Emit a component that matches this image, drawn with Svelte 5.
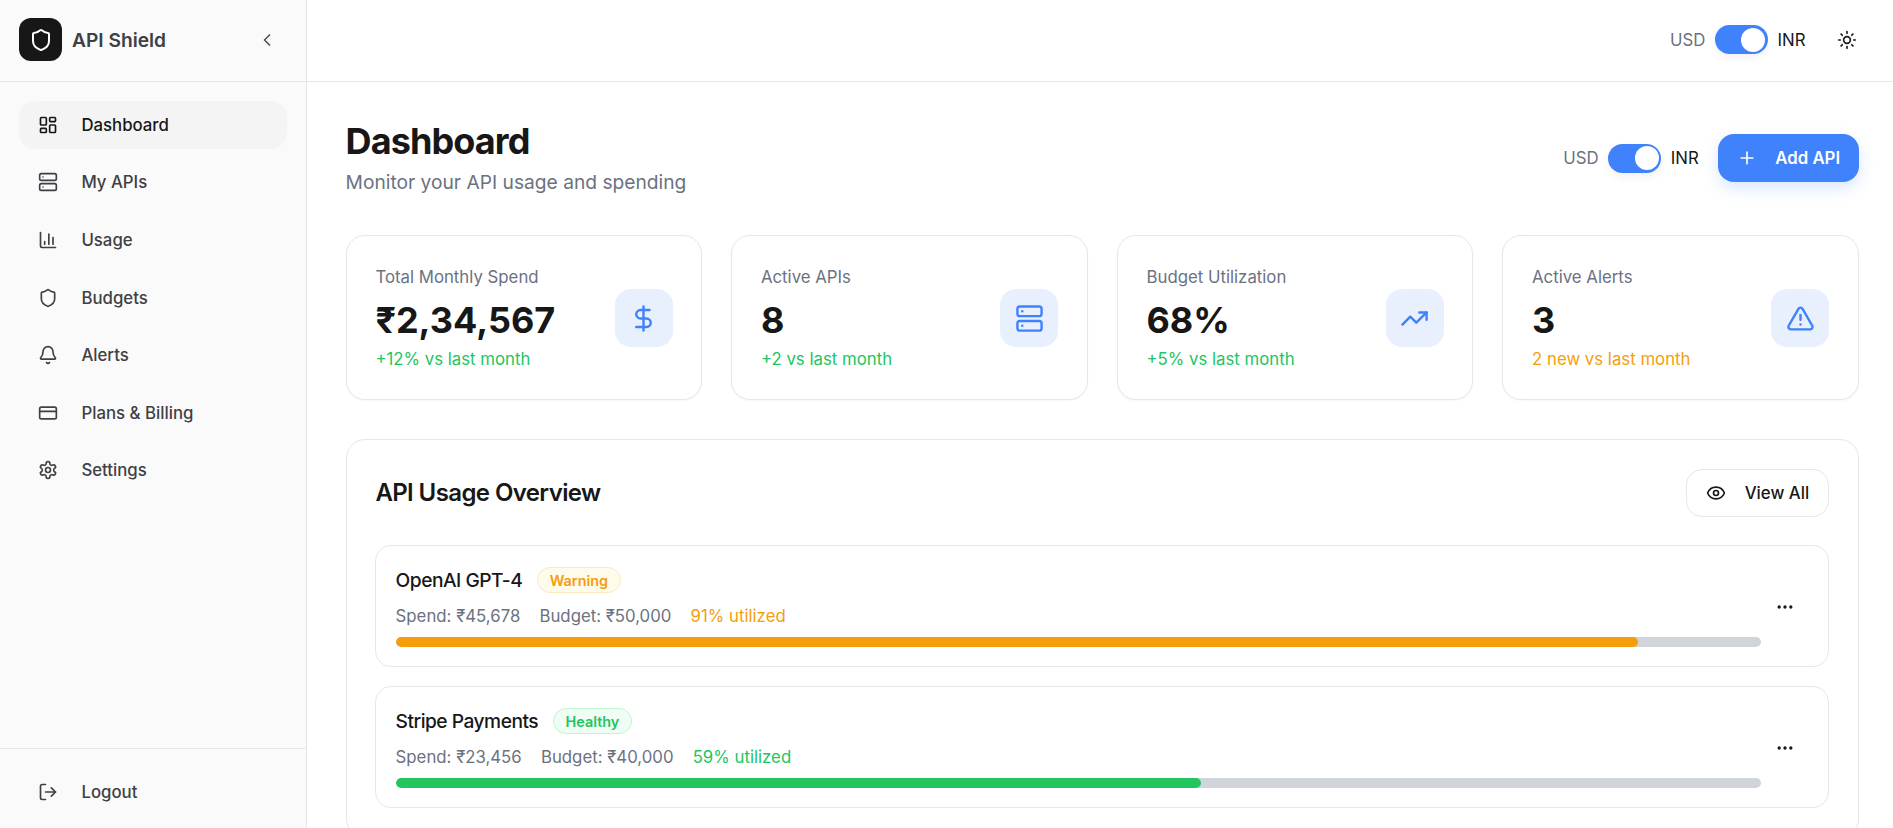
<script lang="ts">
  const icons: Record<string, string> = {
    dashboard: '<rect width="7" height="9" x="3" y="3" rx="1"/><rect width="7" height="5" x="14" y="3" rx="1"/><rect width="7" height="9" x="14" y="12" rx="1"/><rect width="7" height="5" x="3" y="16" rx="1"/>',
    server: '<rect width="20" height="8" x="2" y="2" rx="2"/><rect width="20" height="8" x="2" y="14" rx="2"/><line x1="6" x2="6.01" y1="6" y2="6"/><line x1="6" x2="6.01" y1="18" y2="18"/>',
    chart: '<path d="M3 3v16a2 2 0 0 0 2 2h16"/><path d="M18 17V9"/><path d="M13 17V5"/><path d="M8 17v-3"/>',
    shield: '<path d="M20 13c0 5-3.5 7.5-7.66 8.95a1 1 0 0 1-.67-.01C7.5 20.5 4 18 4 13V6a1 1 0 0 1 1-1c2 0 4.5-1.2 6.24-2.72a1.17 1.17 0 0 1 1.52 0C14.51 3.81 17 5 19 5a1 1 0 0 1 1 1z"/>',
    bell: '<path d="M10.268 21a2 2 0 0 0 3.464 0"/><path d="M3.262 15.326A1 1 0 0 0 4 17h16a1 1 0 0 0 .74-1.673C19.41 13.956 18 12.499 18 8A6 6 0 0 0 6 8c0 4.499-1.411 5.956-2.738 7.326"/>',
    card: '<rect width="20" height="14" x="2" y="5" rx="2"/><line x1="2" x2="22" y1="10" y2="10"/>',
    settings: '<path d="M12.22 2h-.44a2 2 0 0 0-2 2v.18a2 2 0 0 1-1 1.73l-.43.25a2 2 0 0 1-2 0l-.15-.08a2 2 0 0 0-2.73.73l-.22.38a2 2 0 0 0 .73 2.73l.15.1a2 2 0 0 1 1 1.72v.51a2 2 0 0 1-1 1.74l-.15.09a2 2 0 0 0-.73 2.73l.22.38a2 2 0 0 0 2.73.73l.15-.08a2 2 0 0 1 2 0l.43.25a2 2 0 0 1 1 1.73V20a2 2 0 0 0 2 2h.44a2 2 0 0 0 2-2v-.18a2 2 0 0 1 1-1.73l.43-.25a2 2 0 0 1 2 0l.15.08a2 2 0 0 0 2.73-.73l.22-.39a2 2 0 0 0-.73-2.73l-.15-.08a2 2 0 0 1-1-1.74v-.5a2 2 0 0 1 1-1.74l.15-.09a2 2 0 0 0 .73-2.73l-.22-.38a2 2 0 0 0-2.73-.73l-.15.08a2 2 0 0 1-2 0l-.43-.25a2 2 0 0 1-1-1.73V4a2 2 0 0 0-2-2z"/><circle cx="12" cy="12" r="3"/>',
    logout: '<path d="M9 21H5a2 2 0 0 1-2-2V5a2 2 0 0 1 2-2h4"/><polyline points="16 17 21 12 16 7"/><line x1="21" x2="9" y1="12" y2="12"/>',
    chevron: '<path d="m15 18-6-6 6-6"/>',
    sun: '<circle cx="12" cy="12" r="4"/><path d="M12 2v2"/><path d="M12 20v2"/><path d="m4.93 4.93 1.41 1.41"/><path d="m17.66 17.66 1.41 1.41"/><path d="M2 12h2"/><path d="M20 12h2"/><path d="m6.34 17.66-1.41 1.41"/><path d="m19.07 4.93-1.41 1.41"/>',
    plus: '<path d="M5 12h14"/><path d="M12 5v14"/>',
    dollar: '<line x1="12" x2="12" y1="2" y2="22"/><path d="M17 5H9.5a3.5 3.5 0 0 0 0 7h5a3.5 3.5 0 0 1 0 7H6"/>',
    trend: '<polyline points="22 7 13.5 15.5 8.5 10.5 2 17"/><polyline points="16 7 22 7 22 13"/>',
    alert: '<path d="m21.73 18-8-14a2 2 0 0 0-3.48 0l-8 14A2 2 0 0 0 4 21h16a2 2 0 0 0 1.73-3"/><path d="M12 9v4"/><path d="M12 17h.01"/>',
    eye: '<path d="M2.062 12.348a1 1 0 0 1 0-.696 10.75 10.75 0 0 1 19.876 0 1 1 0 0 1 0 .696 10.75 10.75 0 0 1-19.876 0"/><circle cx="12" cy="12" r="3"/>',
    more: '<circle cx="12" cy="12" r="1"/><circle cx="19" cy="12" r="1"/><circle cx="5" cy="12" r="1"/>',
  };

  const nav = [
    { label: "Dashboard", icon: "dashboard", active: true },
    { label: "My APIs", icon: "server" },
    { label: "Usage", icon: "chart" },
    { label: "Budgets", icon: "shield" },
    { label: "Alerts", icon: "bell" },
    { label: "Plans & Billing", icon: "card" },
    { label: "Settings", icon: "settings" },
  ];

  const stats = [
    { label: "Total Monthly Spend", value: "₹2,34,567", note: "+12% vs last month", tone: "good", icon: "dollar" },
    { label: "Active APIs", value: "8", note: "+2 vs last month", tone: "good", icon: "server" },
    { label: "Budget Utilization", value: "68%", note: "+5% vs last month", tone: "good", icon: "trend" },
    { label: "Active Alerts", value: "3", note: "2 new vs last month", tone: "warn", icon: "alert" },
  ];

  const apis = [
    { name: "OpenAI GPT-4", status: "Warning", tone: "warn", spend: "₹45,678", budget: "₹50,000", pct: 91 },
    { name: "Stripe Payments", status: "Healthy", tone: "good", spend: "₹23,456", budget: "₹40,000", pct: 59 },
  ];

  let inr = $state(true);
</script>

{#snippet icon(name: string, size: number)}
  <svg
    width={size}
    height={size}
    viewBox="0 0 24 24"
    fill="none"
    stroke="currentColor"
    stroke-width="2"
    stroke-linecap="round"
    stroke-linejoin="round"
  >
    {@html icons[name]}
  </svg>
{/snippet}

{#snippet currency()}
  <div class="currency">
    <span class="usd">USD</span>
    <button type="button" class="toggle" class:on={inr} aria-label="Toggle currency" onclick={() => (inr = !inr)}>
      <span class="knob"></span>
    </button>
    <span class="inr">INR</span>
  </div>
{/snippet}

<div class="app">
  <aside class="sidebar">
    <div class="brand">
      <div class="logo">{@render icon("shield", 24)}</div>
      <span class="brand-name">API Shield</span>
      <button type="button" class="collapse" aria-label="Collapse">{@render icon("chevron", 20)}</button>
    </div>

    <nav class="nav">
      {#each nav as item (item.label)}
        <button type="button" class="nav-item" class:active={item.active}>
          {@render icon(item.icon, 20)}
          <span>{item.label}</span>
        </button>
      {/each}
    </nav>

    <div class="sidebar-foot">
      <button type="button" class="nav-item">
        {@render icon("logout", 20)}
        <span>Logout</span>
      </button>
    </div>
  </aside>

  <div class="main">
    <header class="topbar">
      {@render currency()}
      <button type="button" class="theme" aria-label="Theme">{@render icon("sun", 20)}</button>
    </header>

    <main class="content">
      <div class="page-head">
        <div>
          <h1>Dashboard</h1>
          <p>Monitor your API usage and spending</p>
        </div>
        <div class="head-actions">
          {@render currency()}
          <button type="button" class="add">
            {@render icon("plus", 20)}
            <span>Add API</span>
          </button>
        </div>
      </div>

      <div class="stats">
        {#each stats as s (s.label)}
          <div class="stat">
            <div class="stat-text">
              <div class="stat-label">{s.label}</div>
              <div class="stat-value">{s.value}</div>
              <div class="stat-note {s.tone}">{s.note}</div>
            </div>
            <div class="stat-icon">{@render icon(s.icon, 29)}</div>
          </div>
        {/each}
      </div>

      <section class="panel">
        <div class="panel-head">
          <h2>API Usage Overview</h2>
          <button type="button" class="view-all">
            {@render icon("eye", 20)}
            <span>View All</span>
          </button>
        </div>

        <div class="rows">
          {#each apis as api (api.name)}
            <div class="row">
              <div class="row-body">
                <div class="row-title">
                  <span class="api-name">{api.name}</span>
                  <span class="badge {api.tone}">{api.status}</span>
                </div>
                <div class="row-meta">
                  <span>Spend: {api.spend}</span>
                  <span>Budget: {api.budget}</span>
                  <span class="pct {api.tone}">{api.pct}% utilized</span>
                </div>
                <div class="track">
                  <div class="fill {api.tone}" style="width: {api.pct}%"></div>
                </div>
              </div>
              <button type="button" class="more" aria-label="More">{@render icon("more", 20)}</button>
            </div>
          {/each}
        </div>
      </section>
    </main>
  </div>
</div>

<style>
  :global(body) {
    margin: 0;
    background: #fff;
    font-family: Inter, "Noto Sans", sans-serif;
    color: #171717;
  }

  button {
    font: inherit;
    color: inherit;
    background: none;
    border: none;
    padding: 0;
    cursor: pointer;
  }

  svg {
    display: block;
    flex-shrink: 0;
  }

  .app {
    display: flex;
    height: 100vh;
    overflow: hidden;
  }

  .sidebar {
    width: 307.2px;
    flex-shrink: 0;
    box-sizing: border-box;
    display: flex;
    flex-direction: column;
    background: #fafafa;
    border-right: 1px solid #e5e7eb;
  }

  .brand {
    height: 81.6px;
    box-sizing: border-box;
    display: flex;
    align-items: center;
    padding: 0 29px 1px 19px;
    border-bottom: 1px solid #e5e7eb;
  }

  .logo {
    width: 43px;
    height: 43px;
    display: flex;
    align-items: center;
    justify-content: center;
    border-radius: 12px;
    background: #171717;
    color: #fff;
  }

  .brand-name {
    margin-left: 10px;
    font-size: 19.2px;
    font-weight: 600;
    color: #3f3f46;
  }

  .collapse {
    margin-left: auto;
    color: #525252;
  }

  .nav {
    flex: 1;
    display: flex;
    flex-direction: column;
    gap: 9.6px;
    padding: 19.2px 19px;
  }

  .nav-item {
    width: 100%;
    height: 48px;
    flex-shrink: 0;
    display: flex;
    align-items: center;
    gap: 23.4px;
    padding: 0 19px;
    box-sizing: border-box;
    border-radius: 16px;
    font-size: 16.8px;
    font-weight: 500;
    color: #3f3f46;
    text-align: left;
  }

  .nav-item.active {
    background: #f4f4f5;
    color: #171717;
  }

  .sidebar-foot {
    padding: 19.2px 19px 12px;
    border-top: 1px solid #e5e7eb;
  }

  .main {
    flex: 1;
    min-width: 0;
    display: flex;
    flex-direction: column;
  }

  .topbar {
    height: 81.6px;
    flex-shrink: 0;
    box-sizing: border-box;
    display: flex;
    align-items: center;
    justify-content: flex-end;
    gap: 31px;
    padding: 0 36.5px 1px 0;
    border-bottom: 1px solid #e5e7eb;
  }

  .theme {
    color: #171717;
  }

  .currency {
    display: flex;
    align-items: center;
    gap: 9.6px;
    font-size: 16.8px;
  }

  .usd {
    color: #6b7280;
  }

  .inr {
    color: #171717;
  }

  .toggle {
    width: 53px;
    height: 29px;
    display: flex;
    align-items: center;
    justify-content: flex-start;
    padding: 0 2.5px;
    box-sizing: border-box;
    border-radius: 15px;
    background: #d1d5db;
    box-shadow: 0 4px 10px rgb(0 0 0 / 0.06);
  }

  .toggle.on {
    justify-content: flex-end;
    background: #3f82fb;
  }

  .knob {
    width: 24px;
    height: 24px;
    border-radius: 50%;
    background: #fff;
  }

  .content {
    padding: 38.4px 34px 0 38.4px;
  }

  .page-head {
    display: flex;
    align-items: center;
    justify-content: space-between;
    margin-bottom: 38.4px;
  }

  h1 {
    margin: 0;
    font-size: 36px;
    line-height: 43.2px;
    font-weight: 700;
    letter-spacing: -0.025em;
  }

  .page-head p {
    margin: 4.8px 0 0;
    font-size: 19.2px;
    line-height: 28.8px;
    color: #6b7280;
  }

  .head-actions {
    display: flex;
    align-items: center;
    gap: 19.2px;
  }

  .add {
    height: 48px;
    width: 141px;
    display: flex;
    align-items: center;
    justify-content: center;
    gap: 18.4px;
    border-radius: 16px;
    background: #3f82fb;
    color: #fff;
    font-size: 16.8px;
    font-weight: 600;
    box-shadow: 0 6px 16px rgb(63 130 251 / 0.2);
  }

  .stats {
    display: grid;
    grid-template-columns: repeat(4, 1fr);
    gap: 28.8px;
    margin-bottom: 39px;
  }

  .stat {
    display: flex;
    align-items: center;
    justify-content: space-between;
    padding: 28.8px;
    background: #fff;
    border: 1px solid #e5e7eb;
    border-radius: 19px;
    box-shadow: 0 1px 2px rgb(0 0 0 / 0.04);
  }

  .stat-label {
    font-size: 16.8px;
    line-height: 25px;
    color: #6b7280;
  }

  .stat-value {
    margin-top: 7px;
    font-size: 36px;
    line-height: 46px;
    font-weight: 700;
  }

  .stat-note {
    margin-top: 6px;
    font-size: 16.8px;
    line-height: 21px;
  }

  .good {
    color: #22c55e;
  }

  .warn {
    color: #f59e0b;
  }

  .stat-icon {
    width: 58px;
    height: 58px;
    margin-top: 2px;
    display: flex;
    align-items: center;
    justify-content: center;
    border-radius: 16px;
    background: #e8f0fe;
    color: #3f82fb;
  }

  .panel {
    padding: 28.8px;
    background: #fff;
    border: 1px solid #e5e7eb;
    border-radius: 19px;
  }

  .panel-head {
    display: flex;
    align-items: center;
    justify-content: space-between;
    margin-bottom: 28.4px;
  }

  h2 {
    margin: 0;
    font-size: 24px;
    font-weight: 600;
    letter-spacing: -0.025em;
  }

  .view-all {
    width: 143px;
    height: 48px;
    box-sizing: border-box;
    display: flex;
    align-items: center;
    justify-content: center;
    gap: 18.4px;
    border: 1px solid #e5e7eb;
    border-radius: 16px;
    font-size: 16.8px;
    font-weight: 500;
  }

  .rows {
    display: flex;
    flex-direction: column;
    gap: 19.2px;
  }

  .row {
    height: 122px;
    box-sizing: border-box;
    display: flex;
    align-items: center;
    padding: 21px 20.2px 19px 19.2px;
    border: 1px solid #e5e7eb;
    border-radius: 16px;
  }

  .row-body {
    flex: 1;
    min-width: 0;
  }

  .row-title {
    display: flex;
    align-items: center;
    gap: 14.4px;
    height: 26px;
  }

  .api-name {
    font-size: 19.2px;
    font-weight: 500;
    letter-spacing: -0.5px;
  }

  .badge {
    height: 26px;
    box-sizing: border-box;
    display: flex;
    align-items: center;
    padding: 0 12px;
    border: 1px solid;
    border-radius: 13px;
    font-size: 14.4px;
    font-weight: 600;
  }

  .badge.warn {
    background: #fffbeb;
    border-color: #fde9c0;
  }

  .badge.good {
    background: #f0fdf4;
    border-color: #bbf7d0;
  }

  .row-meta {
    display: flex;
    gap: 19.2px;
    margin-top: 10.5px;
    font-size: 16.8px;
    line-height: 25px;
    color: #6b7280;
  }

  .pct.warn {
    color: #f59e0b;
  }

  .pct.good {
    color: #22c55e;
  }

  .track {
    height: 9.6px;
    margin-top: 8.5px;
    border-radius: 5px;
    background: #d1d5db;
    overflow: hidden;
  }

  .fill {
    height: 100%;
    border-radius: 5px;
  }

  .fill.warn {
    background: #f59e0b;
  }

  .fill.good {
    background: #22c55e;
  }

  .more {
    width: 47px;
    height: 48px;
    flex-shrink: 0;
    display: flex;
    align-items: center;
    justify-content: center;
    color: #171717;
  }
</style>
